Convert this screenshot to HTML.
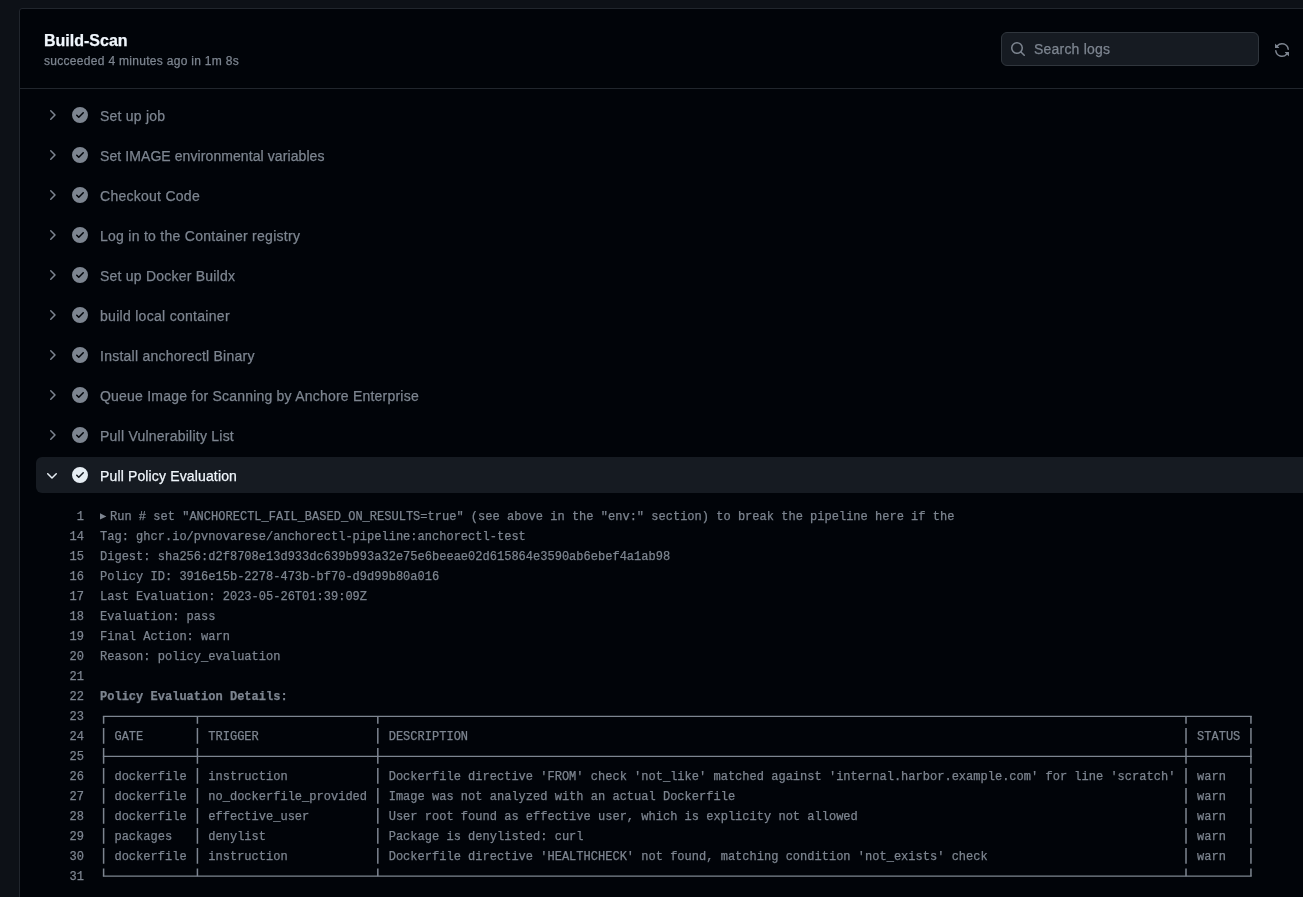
<!DOCTYPE html>
<html><head><meta charset="utf-8">
<style>
html,body{margin:0;padding:0;}
body{width:1303px;height:897px;overflow:hidden;background:#0d1117;position:relative;font-family:"Liberation Sans",sans-serif;}
.wrap{-webkit-text-stroke:0.25px currentColor;position:absolute;left:0;top:0;width:1303px;height:897px;will-change:transform;}
.panel{position:absolute;left:19px;top:8px;width:1400px;height:1000px;background:#010409;border:1px solid #21262d;border-radius:3px;box-sizing:border-box;}
.hdrline{position:absolute;left:20px;top:88px;width:1290px;height:1px;background:#21262d;}
.title{position:absolute;left:44px;top:31px;font-size:16px;font-weight:bold;color:#f0f6fc;line-height:20px;white-space:nowrap;}
.sub{position:absolute;left:44px;top:53px;font-size:12px;letter-spacing:0.3px;color:#7d8590;line-height:16px;white-space:nowrap;}
.search{position:absolute;left:1001px;top:32px;width:258px;height:34px;box-sizing:border-box;background:#161b22;border:1px solid #30363d;border-radius:6px;}
.search svg{position:absolute;left:8px;top:8px;}
.search span{position:absolute;left:32px;top:8px;font-size:14px;letter-spacing:0.21px;line-height:16px;color:#7d8590;white-space:nowrap;}
.sync{position:absolute;left:1274px;top:42px;}
.step{position:absolute;left:36px;width:1300px;height:36px;border-radius:6px;}
.step.open{background:#161b22;}
.step.open .chev{top:11px;}
.step .chev{position:absolute;left:8px;top:10px;}
.step .ic{position:absolute;left:36px;top:10px;}
.step .t{position:absolute;left:64px;top:11px;font-size:14px;line-height:16px;color:#7d8590;white-space:nowrap;}
.step.open .t{color:#f0f6fc;}
.log{position:absolute;left:0;top:507px;width:1303px;font-family:"Liberation Mono",monospace;font-size:12px;line-height:20px;color:#7d8590;letter-spacing:0.016px;}
.tri{position:absolute;left:100px;top:5.8px;}
.tbl{position:absolute;left:0;top:0;}
.row{position:relative;height:20px;white-space:pre;}
.ln{position:absolute;left:0;width:84px;text-align:right;}
.tx{position:absolute;left:100px;}
.b{font-weight:bold;}
</style></head><body>
<div class="wrap">
<div class="panel"></div>
<div class="hdrline"></div>
<div class="title">Build-Scan</div>
<div class="sub">succeeded 4 minutes ago in 1m 8s</div>
<div class="search">
<svg width="16" height="16" viewBox="0 0 16 16" fill="#7d8590"><path d="M10.68 11.74a6 6 0 0 1-7.922-8.982 6 6 0 0 1 8.982 7.922l3.04 3.04a.749.749 0 0 1-.326 1.275.749.749 0 0 1-.734-.215ZM11.5 7a4.499 4.499 0 1 0-8.997 0A4.499 4.499 0 0 0 11.5 7Z"/></svg>
<span>Search logs</span>
</div>
<svg class="sync" width="16" height="16" viewBox="0 0 16 16" fill="#7d8590"><path d="M1.705 8.005a.75.75 0 0 1 .834.656 5.5 5.5 0 0 0 9.592 2.97l-1.204-1.204a.25.25 0 0 1 .177-.427h3.646a.25.25 0 0 1 .25.25v3.646a.25.25 0 0 1-.427.177l-1.38-1.38A7.002 7.002 0 0 1 1.05 8.84a.75.75 0 0 1 .656-.834ZM8 2.5a5.487 5.487 0 0 0-4.131 1.869l1.204 1.204A.25.25 0 0 1 4.896 6H1.25A.25.25 0 0 1 1 5.750V2.104a.25.25 0 0 1 .427-.177l1.38 1.38A7.002 7.002 0 0 1 14.95 7.16a.75.75 0 0 1-1.490.178A5.5 5.5 0 0 0 8 2.5Z"/></svg>
<!--STEPS-->
<div class="step" style="top:97px"><svg class="chev" width="16" height="16" viewBox="0 0 16 16" fill="#7d8590"><path d="M6.22 3.22a.75.75 0 0 1 1.06 0l4.25 4.25a.75.75 0 0 1 0 1.06l-4.25 4.25a.751.751 0 0 1-1.042-.018.751.751 0 0 1-.018-1.042L9.94 8 6.22 4.28a.75.75 0 0 1 0-1.06Z"/></svg><svg class="ic" width="16" height="16" viewBox="0 0 16 16" fill="#7d8590"><path d="M8 16A8 8 0 1 1 8 0a8 8 0 0 1 0 16Zm3.78-9.72a.751.751 0 0 0-.018-1.042.751.751 0 0 0-1.042-.018L6.75 9.19 5.28 7.72a.751.751 0 0 0-1.042.018.751.751 0 0 0-.018 1.042l2 2a.75.75 0 0 0 1.06 0Z"/></svg><span class="t" style="letter-spacing:0.222px">Set up job</span></div>
<div class="step" style="top:137px"><svg class="chev" width="16" height="16" viewBox="0 0 16 16" fill="#7d8590"><path d="M6.22 3.22a.75.75 0 0 1 1.06 0l4.25 4.25a.75.75 0 0 1 0 1.06l-4.25 4.25a.751.751 0 0 1-1.042-.018.751.751 0 0 1-.018-1.042L9.94 8 6.22 4.28a.75.75 0 0 1 0-1.06Z"/></svg><svg class="ic" width="16" height="16" viewBox="0 0 16 16" fill="#7d8590"><path d="M8 16A8 8 0 1 1 8 0a8 8 0 0 1 0 16Zm3.78-9.72a.751.751 0 0 0-.018-1.042.751.751 0 0 0-1.042-.018L6.75 9.19 5.28 7.72a.751.751 0 0 0-1.042.018.751.751 0 0 0-.018 1.042l2 2a.75.75 0 0 0 1.06 0Z"/></svg><span class="t" style="letter-spacing:0.084px">Set IMAGE environmental variables</span></div>
<div class="step" style="top:177px"><svg class="chev" width="16" height="16" viewBox="0 0 16 16" fill="#7d8590"><path d="M6.22 3.22a.75.75 0 0 1 1.06 0l4.25 4.25a.75.75 0 0 1 0 1.06l-4.25 4.25a.751.751 0 0 1-1.042-.018.751.751 0 0 1-.018-1.042L9.94 8 6.22 4.28a.75.75 0 0 1 0-1.06Z"/></svg><svg class="ic" width="16" height="16" viewBox="0 0 16 16" fill="#7d8590"><path d="M8 16A8 8 0 1 1 8 0a8 8 0 0 1 0 16Zm3.78-9.72a.751.751 0 0 0-.018-1.042.751.751 0 0 0-1.042-.018L6.75 9.19 5.28 7.72a.751.751 0 0 0-1.042.018.751.751 0 0 0-.018 1.042l2 2a.75.75 0 0 0 1.06 0Z"/></svg><span class="t" style="letter-spacing:0.267px">Checkout Code</span></div>
<div class="step" style="top:217px"><svg class="chev" width="16" height="16" viewBox="0 0 16 16" fill="#7d8590"><path d="M6.22 3.22a.75.75 0 0 1 1.06 0l4.25 4.25a.75.75 0 0 1 0 1.06l-4.25 4.25a.751.751 0 0 1-1.042-.018.751.751 0 0 1-.018-1.042L9.94 8 6.22 4.28a.75.75 0 0 1 0-1.06Z"/></svg><svg class="ic" width="16" height="16" viewBox="0 0 16 16" fill="#7d8590"><path d="M8 16A8 8 0 1 1 8 0a8 8 0 0 1 0 16Zm3.78-9.72a.751.751 0 0 0-.018-1.042.751.751 0 0 0-1.042-.018L6.75 9.19 5.28 7.72a.751.751 0 0 0-1.042.018.751.751 0 0 0-.018 1.042l2 2a.75.75 0 0 0 1.06 0Z"/></svg><span class="t" style="letter-spacing:0.274px">Log in to the Container registry</span></div>
<div class="step" style="top:257px"><svg class="chev" width="16" height="16" viewBox="0 0 16 16" fill="#7d8590"><path d="M6.22 3.22a.75.75 0 0 1 1.06 0l4.25 4.25a.75.75 0 0 1 0 1.06l-4.25 4.25a.751.751 0 0 1-1.042-.018.751.751 0 0 1-.018-1.042L9.94 8 6.22 4.28a.75.75 0 0 1 0-1.06Z"/></svg><svg class="ic" width="16" height="16" viewBox="0 0 16 16" fill="#7d8590"><path d="M8 16A8 8 0 1 1 8 0a8 8 0 0 1 0 16Zm3.78-9.72a.751.751 0 0 0-.018-1.042.751.751 0 0 0-1.042-.018L6.75 9.19 5.28 7.72a.751.751 0 0 0-1.042.018.751.751 0 0 0-.018 1.042l2 2a.75.75 0 0 0 1.06 0Z"/></svg><span class="t" style="letter-spacing:0.221px">Set up Docker Buildx</span></div>
<div class="step" style="top:297px"><svg class="chev" width="16" height="16" viewBox="0 0 16 16" fill="#7d8590"><path d="M6.22 3.22a.75.75 0 0 1 1.06 0l4.25 4.25a.75.75 0 0 1 0 1.06l-4.25 4.25a.751.751 0 0 1-1.042-.018.751.751 0 0 1-.018-1.042L9.94 8 6.22 4.28a.75.75 0 0 1 0-1.06Z"/></svg><svg class="ic" width="16" height="16" viewBox="0 0 16 16" fill="#7d8590"><path d="M8 16A8 8 0 1 1 8 0a8 8 0 0 1 0 16Zm3.78-9.72a.751.751 0 0 0-.018-1.042.751.751 0 0 0-1.042-.018L6.75 9.19 5.28 7.72a.751.751 0 0 0-1.042.018.751.751 0 0 0-.018 1.042l2 2a.75.75 0 0 0 1.06 0Z"/></svg><span class="t" style="letter-spacing:0.29px">build local container</span></div>
<div class="step" style="top:337px"><svg class="chev" width="16" height="16" viewBox="0 0 16 16" fill="#7d8590"><path d="M6.22 3.22a.75.75 0 0 1 1.06 0l4.25 4.25a.75.75 0 0 1 0 1.06l-4.25 4.25a.751.751 0 0 1-1.042-.018.751.751 0 0 1-.018-1.042L9.94 8 6.22 4.28a.75.75 0 0 1 0-1.06Z"/></svg><svg class="ic" width="16" height="16" viewBox="0 0 16 16" fill="#7d8590"><path d="M8 16A8 8 0 1 1 8 0a8 8 0 0 1 0 16Zm3.78-9.72a.751.751 0 0 0-.018-1.042.751.751 0 0 0-1.042-.018L6.75 9.19 5.28 7.72a.751.751 0 0 0-1.042.018.751.751 0 0 0-.018 1.042l2 2a.75.75 0 0 0 1.06 0Z"/></svg><span class="t" style="letter-spacing:0.242px">Install anchorectl Binary</span></div>
<div class="step" style="top:377px"><svg class="chev" width="16" height="16" viewBox="0 0 16 16" fill="#7d8590"><path d="M6.22 3.22a.75.75 0 0 1 1.06 0l4.25 4.25a.75.75 0 0 1 0 1.06l-4.25 4.25a.751.751 0 0 1-1.042-.018.751.751 0 0 1-.018-1.042L9.94 8 6.22 4.28a.75.75 0 0 1 0-1.06Z"/></svg><svg class="ic" width="16" height="16" viewBox="0 0 16 16" fill="#7d8590"><path d="M8 16A8 8 0 1 1 8 0a8 8 0 0 1 0 16Zm3.78-9.72a.751.751 0 0 0-.018-1.042.751.751 0 0 0-1.042-.018L6.75 9.19 5.28 7.72a.751.751 0 0 0-1.042.018.751.751 0 0 0-.018 1.042l2 2a.75.75 0 0 0 1.06 0Z"/></svg><span class="t" style="letter-spacing:0.216px">Queue Image for Scanning by Anchore Enterprise</span></div>
<div class="step" style="top:417px"><svg class="chev" width="16" height="16" viewBox="0 0 16 16" fill="#7d8590"><path d="M6.22 3.22a.75.75 0 0 1 1.06 0l4.25 4.25a.75.75 0 0 1 0 1.06l-4.25 4.25a.751.751 0 0 1-1.042-.018.751.751 0 0 1-.018-1.042L9.94 8 6.22 4.28a.75.75 0 0 1 0-1.06Z"/></svg><svg class="ic" width="16" height="16" viewBox="0 0 16 16" fill="#7d8590"><path d="M8 16A8 8 0 1 1 8 0a8 8 0 0 1 0 16Zm3.78-9.72a.751.751 0 0 0-.018-1.042.751.751 0 0 0-1.042-.018L6.75 9.19 5.28 7.72a.751.751 0 0 0-1.042.018.751.751 0 0 0-.018 1.042l2 2a.75.75 0 0 0 1.06 0Z"/></svg><span class="t" style="letter-spacing:0.232px">Pull Vulnerability List</span></div>
<div class="step open" style="top:457px"><svg class="chev" width="16" height="16" viewBox="0 0 16 16" fill="#e6edf3"><path d="M12.78 5.22a.749.749 0 0 1 0 1.06l-4.25 4.25a.749.749 0 0 1-1.06 0L3.22 6.28a.749.749 0 0 1 .326-1.275.749.749 0 0 1 .734.215L8 8.939l3.72-3.719a.749.749 0 0 1 1.06 0Z"/></svg><svg class="ic" width="16" height="16" viewBox="0 0 16 16" fill="#e6edf3"><path d="M8 16A8 8 0 1 1 8 0a8 8 0 0 1 0 16Zm3.78-9.72a.751.751 0 0 0-.018-1.042.751.751 0 0 0-1.042-.018L6.75 9.19 5.28 7.72a.751.751 0 0 0-1.042.018.751.751 0 0 0-.018 1.042l2 2a.75.75 0 0 0 1.06 0Z"/></svg><span class="t" style="letter-spacing:0.143px">Pull Policy Evaluation</span></div>
<!--/STEPS-->
<!--LOG-->
<div class="log">
<div class="row"><span class="ln">1</span><svg class="tri" width="8" height="8" viewBox="0 0 8 8"><path d="M0 0.2L6.4 3.4L0 6.6Z" fill="#7d8590"/></svg><span class="tx" style="left:110px">Run # set &quot;ANCHORECTL_FAIL_BASED_ON_RESULTS=true&quot; (see above in the &quot;env:&quot; section) to break the pipeline here if the</span></div>
<div class="row"><span class="ln">14</span><span class="tx">Tag: ghcr.io/pvnovarese/anchorectl-pipeline:anchorectl-test</span></div>
<div class="row"><span class="ln">15</span><span class="tx">Digest: sha256:d2f8708e13d933dc639b993a32e75e6beeae02d615864e3590ab6ebef4a1ab98</span></div>
<div class="row"><span class="ln">16</span><span class="tx">Policy ID: 3916e15b-2278-473b-bf70-d9d99b80a016</span></div>
<div class="row"><span class="ln">17</span><span class="tx">Last Evaluation: 2023-05-26T01:39:09Z</span></div>
<div class="row"><span class="ln">18</span><span class="tx">Evaluation: pass</span></div>
<div class="row"><span class="ln">19</span><span class="tx">Final Action: warn</span></div>
<div class="row"><span class="ln">20</span><span class="tx">Reason: policy_evaluation</span></div>
<div class="row"><span class="ln">21</span><span class="tx"></span></div>
<div class="row"><span class="ln">22</span><span class="tx b">Policy Evaluation Details:</span></div>
<div class="row"><span class="ln">23</span></div>
<div class="row"><span class="ln">24</span><span class="tx">  GATE         TRIGGER                  DESCRIPTION                                                                                                     STATUS</span></div>
<div class="row"><span class="ln">25</span></div>
<div class="row"><span class="ln">26</span><span class="tx">  dockerfile   instruction              Dockerfile directive &#x27;FROM&#x27; check &#x27;not_like&#x27; matched against &#x27;internal.harbor.example.com&#x27; for line &#x27;scratch&#x27;   warn  </span></div>
<div class="row"><span class="ln">27</span><span class="tx">  dockerfile   no_dockerfile_provided   Image was not analyzed with an actual Dockerfile                                                                warn  </span></div>
<div class="row"><span class="ln">28</span><span class="tx">  dockerfile   effective_user           User root found as effective user, which is explicity not allowed                                               warn  </span></div>
<div class="row"><span class="ln">29</span><span class="tx">  packages     denylist                 Package is denylisted: curl                                                                                     warn  </span></div>
<div class="row"><span class="ln">30</span><span class="tx">  dockerfile   instruction              Dockerfile directive &#x27;HEALTHCHECK&#x27; not found, matching condition &#x27;not_exists&#x27; check                             warn  </span></div>
<div class="row"><span class="ln">31</span></div>
</div>
<svg class="tbl" width="1303" height="897" viewBox="0 0 1303 897"><path d="M102.86 716.3H1251.70M102.86 756.4H1251.70M102.86 876.2H1251.70" stroke="#7d8590" stroke-width="1.2" fill="none"/><path d="M103.61 716.3V723.8M103.61 728V743.8M103.61 748V763.8M103.61 768V783.8M103.61 788V803.8M103.61 808V823.8M103.61 828V843.8M103.61 848V863.8M103.61 868.5V876.2M197.42 716.3V723.8M197.42 728V743.8M197.42 748V763.8M197.42 768V783.8M197.42 788V803.8M197.42 808V823.8M197.42 828V843.8M197.42 848V863.8M197.42 868.5V876.2M377.82 716.3V723.8M377.82 728V743.8M377.82 748V763.8M377.82 768V783.8M377.82 788V803.8M377.82 808V823.8M377.82 828V843.8M377.82 848V863.8M377.82 868.5V876.2M1186.01 716.3V723.8M1186.01 728V743.8M1186.01 748V763.8M1186.01 768V783.8M1186.01 788V803.8M1186.01 808V823.8M1186.01 828V843.8M1186.01 848V863.8M1186.01 868.5V876.2M1250.95 716.3V723.8M1250.95 728V743.8M1250.95 748V763.8M1250.95 768V783.8M1250.95 788V803.8M1250.95 808V823.8M1250.95 828V843.8M1250.95 848V863.8M1250.95 868.5V876.2" stroke="#7d8590" stroke-width="1.5" fill="none"/></svg>
<!--/LOG-->
</div>
</body></html>
